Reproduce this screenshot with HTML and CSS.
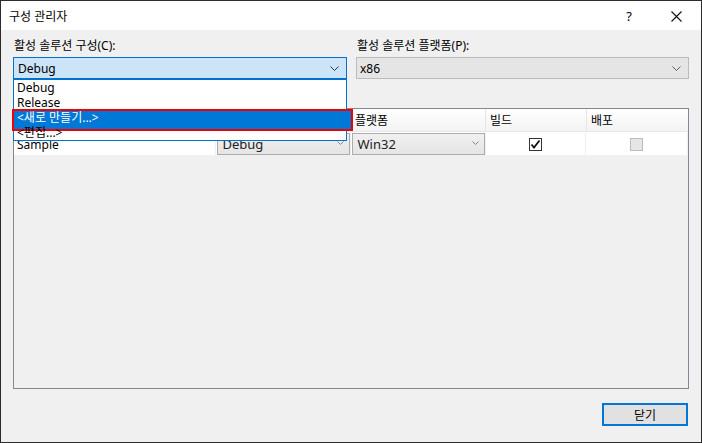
FILE: index.html
```html
<!DOCTYPE html>
<html lang="ko">
<head>
    <meta charset="UTF-8">
    <title>구성 관리자</title>
    <link rel="stylesheet" href="styles.css">
</head>
<body>
    <div class="window">
        <div class="titlebar">
            <span class="title">구성 관리자</span>
            <span class="help">?</span>
            <span class="close">
                <svg width="11" height="11" viewBox="0 0 11 11"><path d="M0.5 0.5 L10.5 10.5 M10.5 0.5 L0.5 10.5" stroke="#111" stroke-width="1.1" fill="none"/></svg>
            </span>
        </div>

        <div class="content">
            <div class="pickers">
                <div class="picker">
                    <div class="label">활성 솔루션 구성(C):</div>
                    <div class="combo combo-open">
                        <span>Debug</span>
                        <svg class="chev" width="9" height="5" viewBox="0 0 9 5"><path d="M0.5 0.5 L4.5 4.5 L8.5 0.5" stroke="#333" fill="none"/></svg>
                        <ul class="droplist">
                            <li>Debug</li>
                            <li>Release</li>
                            <li class="hl"><span>&lt;새로 만들기...&gt;</span></li>
                            <li>&lt;편집...&gt;</li>
                        </ul>
                    </div>
                </div>
                <div class="picker">
                    <div class="label">활성 솔루션 플랫폼(P):</div>
                    <div class="combo combo-gray">
                        <span>x86</span>
                        <svg class="chev" width="9" height="5" viewBox="0 0 9 5"><path d="M0.5 0.5 L4.5 4.5 L8.5 0.5" stroke="#606060" fill="none"/></svg>
                    </div>
                </div>
            </div>

            <div class="grid">
                <div class="grid-row grid-head">
                    <div class="cell c1">프로젝트</div>
                    <div class="cell c2">구성</div>
                    <div class="cell c3">플랫폼</div>
                    <div class="cell c4">빌드</div>
                    <div class="cell c5">배포</div>
                </div>
                <div class="grid-row grid-body">
                    <div class="cell c1">Sample</div>
                    <div class="cell c2">
                        <div class="cell-combo">
                            <span>Debug</span>
                            <svg class="mini-chev" width="7" height="4" viewBox="0 0 7 4"><path d="M0.5 0.5 L3.5 3.5 L6.5 0.5" stroke="#888" fill="none"/></svg>
                        </div>
                    </div>
                    <div class="cell c3">
                        <div class="cell-combo">
                            <span>Win32</span>
                            <svg class="mini-chev" width="7" height="4" viewBox="0 0 7 4"><path d="M0.5 0.5 L3.5 3.5 L6.5 0.5" stroke="#888" fill="none"/></svg>
                        </div>
                    </div>
                    <div class="cell c4 center">
                        <span class="check on">
                            <svg width="11" height="11" viewBox="0 0 11 11"><path d="M1.5 5.5 L4 8.5 L9.5 1.5" stroke="#111" stroke-width="1.8" fill="none"/></svg>
                        </span>
                    </div>
                    <div class="cell c5 center">
                        <span class="check off"></span>
                    </div>
                </div>
            </div>

            <div class="actions">
                <button class="btn">닫기</button>
            </div>
        </div>
    </div>
</body>
</html>
```

FILE: styles.css
```css
* {
    box-sizing: border-box;
}

body {
    margin: 0;
    font-family: "Segoe UI", "Noto Sans", "Noto Sans CJK KR", sans-serif;
    font-size: 12px;
    color: #000;
    background: #f0f0f0;
}

.window {
    width: 702px;
    height: 443px;
    border: 1px solid #2b2b2b;
    background: #f0f0f0;
    display: flex;
    flex-direction: column;
}

.titlebar {
    height: 29px;
    background: #fff;
    display: flex;
    align-items: center;
    padding-left: 8px;
}

.title {
    flex: 1;
    font-size: 12px;
}

.help {
    font-size: 13px;
    width: 44px;
    text-align: center;
    margin-right: 2px;
}

.close {
    width: 46px;
    display: flex;
    justify-content: center;
    margin-right: 2px;
    padding-top: 1px;
}

.content {
    flex: 1;
    padding: 8px 12px 0 12px;
    display: flex;
    flex-direction: column;
}

.pickers {
    display: grid;
    grid-template-columns: 334px 333px;
    gap: 9px;
}

.label {
    height: 16px;
    line-height: 16px;
    margin-bottom: 3px;
    padding-left: 1px;
}

.combo {
    position: relative;
    height: 22px;
    display: flex;
    align-items: center;
    padding-left: 4px;
    border: 1px solid #adadad;
}

.combo span {
    flex: 1;
}

.combo .chev {
    margin-right: 7px;
}

.combo-open {
    background: #cce4f7;
    border-color: #0071cc;
}

.combo-gray {
    background: #e5e5e5;
    border-color: #bcbcbc;
    padding-left: 3px;
}

.droplist {
    position: absolute;
    top: 21px;
    left: -1px;
    width: 334px;
    margin: 0;
    padding: 0;
    list-style: none;
    background: #fff;
    border: 1px solid #0071cc;
    z-index: 10;
}

.droplist li {
    position: relative;
    height: 15px;
    line-height: 15px;
    padding-left: 3px;
}

.droplist li.hl {
    color: #fff;
}

.droplist li.hl::before {
    content: "";
    position: absolute;
    top: -1px;
    left: -2px;
    right: -7px;
    height: 18px;
    background: #0078d7;
    border: 2px solid #f00000;
}

.droplist li.hl span {
    position: relative;
}

.grid {
    margin-top: 29px;
    height: 281px;
    border: 1px solid #828790;
    background: #f0f0f0;
}

.grid-row {
    display: flex;
}

.cell {
    display: flex;
    align-items: center;
    border-right: 1px solid #e5e5e5;
}

.c1 { width: 202px; padding-left: 3px; }
.c2 { width: 135px; }
.c3 { width: 135px; }
.c4 { width: 101px; }
.c5 { width: 101px; border-right: none; }

.grid-head {
    height: 23px;
    background: linear-gradient(#ffffff, #f3f3f5);
    border-bottom: 1px solid #e8e8e8;
}

.grid-head .cell {
    padding-left: 4px;
}

.grid-body {
    height: 23px;
    background: #fff;
    margin-right: 1px;
}

.grid-body .c1 {
    padding-top: 2px;
}

.grid-body .cell {
    border-right-color: #f0f0f0;
}

.cell.center {
    justify-content: center;
}

.cell-combo {
    width: 133px;
    height: 22px;
    margin: 1px 0 0 1px;
    display: flex;
    align-items: center;
    padding-left: 5px;
    font-size: 13px;
    color: #222;
    background: linear-gradient(#f0f0f0, #e5e5e5);
    border: 1px solid #acacac;
}

.cell-combo span {
    flex: 1;
}

.mini-chev {
    margin-right: 5px;
    margin-top: -3px;
}

.check {
    width: 13px;
    height: 13px;
    display: flex;
    align-items: center;
    justify-content: center;
    margin-top: 2px;
}

.check.on {
    background: #fff;
    border: 1px solid #333;
}

.check.off {
    background: #e6e6e6;
    border: 1px solid #bcbcbc;
}

.actions {
    display: flex;
    justify-content: flex-end;
    margin-top: 14px;
    padding-right: 1px;
}

.btn {
    width: 86px;
    height: 23px;
    font-family: inherit;
    font-size: 12px;
    background: #e1e1e1;
    border: 2px solid #0078d7;
    padding: 0;
}
```
